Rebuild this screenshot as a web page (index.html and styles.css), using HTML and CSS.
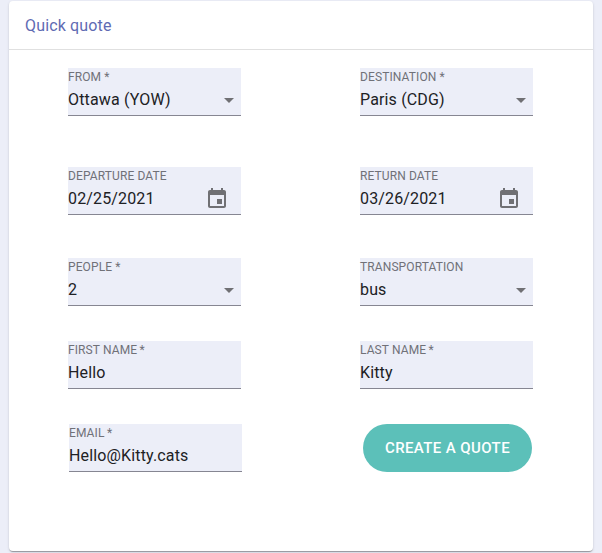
FILE: index.html
```html
<!DOCTYPE html>
<html lang="en">
<head>
<meta charset="utf-8">
<title>Quick quote</title>
<link rel="stylesheet" href="styles.css">
</head>
<body>
<main class="card">
  <h1 class="card-title">Quick quote</h1>
  <form class="form">
    <div class="field">
      <span class="label">FROM *</span>
      <span class="value">Ottawa (YOW)</span>
      <svg class="arrow" viewBox="0 0 24 24"><path d="M7 10l5 5 5-5z"/></svg>
    </div>
    <div class="field">
      <span class="label label-required">DESTINATION *</span>
      <span class="value">Paris (CDG)</span>
      <svg class="arrow" viewBox="0 0 24 24"><path d="M7 10l5 5 5-5z"/></svg>
    </div>
    <div class="field">
      <span class="label">DEPARTURE DATE</span>
      <span class="value">02/25/2021</span>
      <svg class="calendar" viewBox="0 0 24 24"><path d="M17 12h-5v5h5v-5zM16 1v2H8V1H6v2H5c-1.11 0-1.99.9-1.99 2L3 19c0 1.1.89 2 2 2h14c1.1 0 2-.9 2-2V5c0-1.1-.9-2-2-2h-1V1h-2zm3 18H5V8h14v11z"/></svg>
    </div>
    <div class="field">
      <span class="label">RETURN DATE</span>
      <span class="value">03/26/2021</span>
      <svg class="calendar" viewBox="0 0 24 24"><path d="M17 12h-5v5h5v-5zM16 1v2H8V1H6v2H5c-1.11 0-1.99.9-1.99 2L3 19c0 1.1.89 2 2 2h14c1.1 0 2-.9 2-2V5c0-1.1-.9-2-2-2h-1V1h-2zm3 18H5V8h14v11z"/></svg>
    </div>
    <div class="field">
      <span class="label label-required">PEOPLE *</span>
      <span class="value">2</span>
      <svg class="arrow" viewBox="0 0 24 24"><path d="M7 10l5 5 5-5z"/></svg>
    </div>
    <div class="field">
      <span class="label">TRANSPORTATION</span>
      <span class="value">bus</span>
      <svg class="arrow" viewBox="0 0 24 24"><path d="M7 10l5 5 5-5z"/></svg>
    </div>
    <div class="field">
      <span class="label label-required">FIRST NAME<span class="mark"> *</span></span>
      <span class="value">Hello</span>
    </div>
    <div class="field">
      <span class="label label-required">LAST NAME<span class="mark"> *</span></span>
      <span class="value">Kitty</span>
    </div>
    <div class="field field-email">
      <span class="label label-required">EMAIL<span class="mark"> *</span></span>
      <span class="value">Hello@Kitty.cats</span>
    </div>
    <button class="submit" type="button">CREATE A QUOTE</button>
  </form>
</main>
</body>
</html>
```
FILE: styles.css
```css
* {
  box-sizing: border-box;
}

body {
  margin: 0;
  height: 553px;
  overflow: hidden;
  padding: 1px 9px 2px;
  background: #eceef8;
  font-family: Roboto, "Liberation Sans", sans-serif;
}

.card {
  height: 550px;
  background: #fff;
  border-radius: 4px;
  box-shadow: 0 2px 1px -1px rgba(0, 0, 0, 0.2), 0 1px 1px rgba(0, 0, 0, 0.14), 0 1px 3px rgba(0, 0, 0, 0.12);
}

.card-title {
  margin: 0;
  height: 49px;
  padding: 0 16px;
  border-bottom: 1px solid #e0e0e0;
  font-size: 16px;
  font-weight: 400;
  line-height: 49px;
  letter-spacing: 0.15px;
  color: #5f6bb3;
}

.form {
  display: grid;
  grid-template-columns: 173px 173px;
  grid-template-rows: 99px 91px 83px 83px 48px;
  column-gap: 119px;
  padding: 18px 0 0 59px;
}

.field {
  position: relative;
  display: flex;
  flex-direction: column;
  height: 48px;
  background: #eceef8;
  border-bottom: 1px solid #868692;
}

.field-email {
  margin: 0 -1px 0 1px;
}

.label {
  height: 18px;
  font-size: 12px;
  line-height: 18px;
  letter-spacing: 0.11px;
  color: #707178;
}

.mark {
  word-spacing: -0.7px;
}

.value {
  font-size: 16px;
  line-height: 28px;
  letter-spacing: 0.15px;
  color: #202124;
}

.arrow,
.calendar {
  position: absolute;
  width: 24px;
  height: 24px;
  fill: #707074;
}

.arrow {
  right: 0;
  top: 20px;
}

.calendar {
  right: 12px;
  top: 20px;
}

.submit {
  width: 169px;
  height: 48px;
  margin-left: 3px;
  padding: 0;
  border: 0;
  border-radius: 24px;
  background: #5cc0b9;
  color: #fff;
  font-family: inherit;
  font-size: 15px;
  font-weight: 500;
  letter-spacing: 0.4px;
  white-space: nowrap;
}
```
